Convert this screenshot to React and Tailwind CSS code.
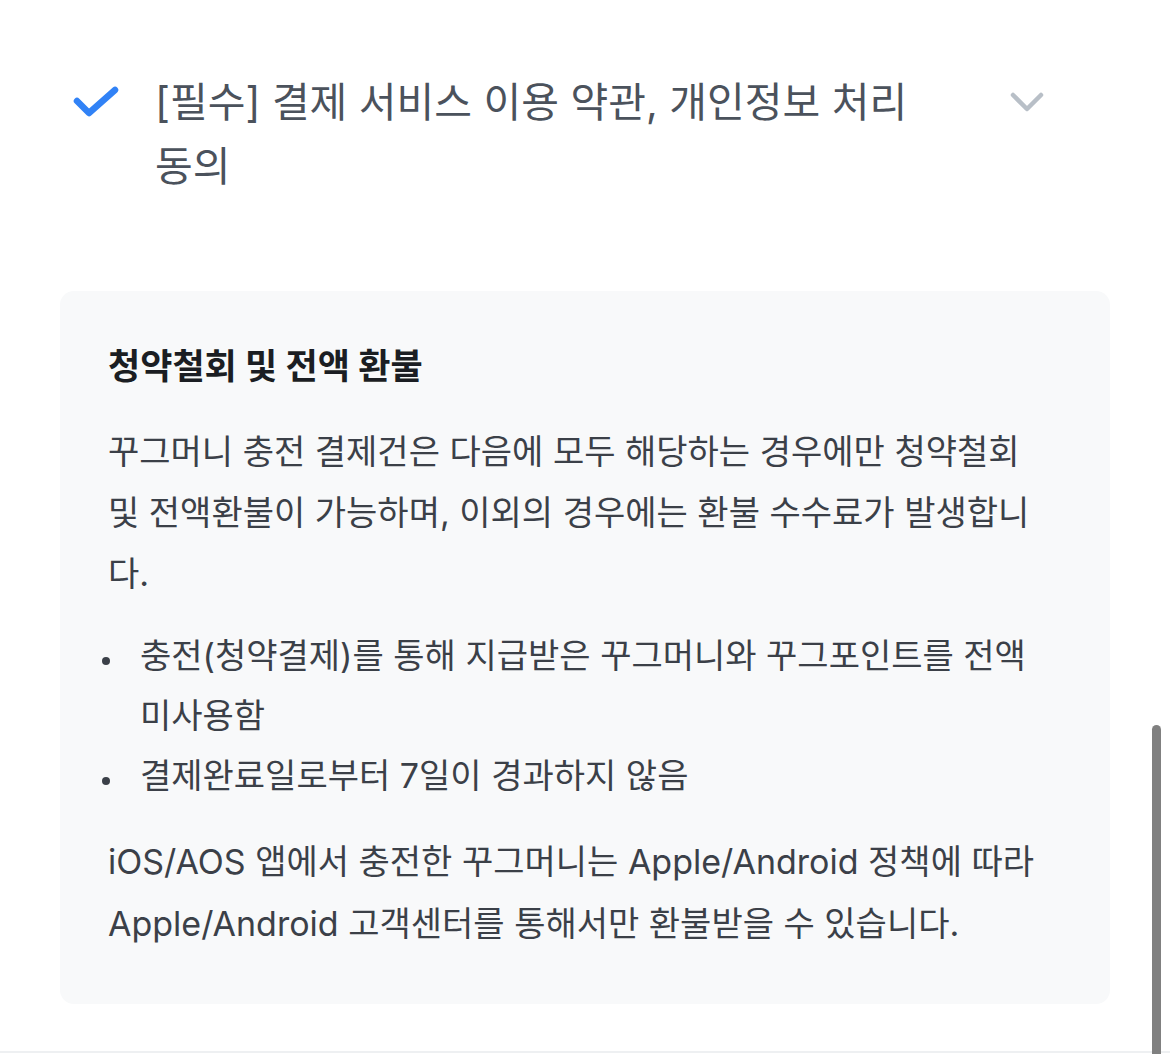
const font = { fontFamily: 'Inter, "Noto Sans CJK KR", sans-serif' };

const bullets = [
  '충전(청약결제)를 통해 지급받은 꾸그머니와 꾸그포인트를 전액 미사용함',
  '결제완료일로부터 7일이 경과하지 않음',
];

const App = () => {
  return (
    <div className="relative min-h-screen bg-white overflow-hidden" style={font}>
      {/* agreement row */}
      <div className="flex items-start pt-[70px] pl-[72px] pr-[126px]">
        <div className="w-[83px] h-[64px] flex items-center shrink-0">
          <svg width="48" height="34" viewBox="0 0 48 34" fill="none">
            <path d="M5 16 L17 28 L43 5" stroke="#3182f6" strokeWidth="6.5" strokeLinecap="round" strokeLinejoin="round" />
          </svg>
        </div>
        <p className="w-[800px] text-[41px] leading-[64px] text-[#4b525c]">
          [필수] 결제 서비스 이용 약관, 개인정보 처리 동의
        </p>
        <div className="h-[64px] flex items-center ml-auto">
          <svg width="34" height="20" viewBox="0 0 34 20" fill="none">
            <path d="M3 3 L17 17 L31 3" stroke="#b8bfc7" strokeWidth="4.5" strokeLinecap="round" strokeLinejoin="round" />
          </svg>
        </div>
      </div>

      {/* refund info card */}
      <div className="mx-[60px] mt-[93px] bg-[#f8f9fa] rounded-[14px] pl-[48px] pr-[62px] pt-[48px] pb-[49px] text-[34px] text-[#3b4048]">
        <h3 className="font-bold text-[35px] text-[#1b1e23] leading-[54px]">청약철회 및 전액 환불</h3>
        <p className="mt-[28px] leading-[61px]">
          꾸그머니 충전 결제건은 다음에 모두 해당하는 경우에만 청약철회 및 전액환불이 가능하며, 이외의 경우에는 환불 수수료가 발생합니다.
        </p>
        <ul className="mt-[22px]">
          {bullets.map(b => (
            <li key={b} className="flex leading-[60px]">
              <span className="w-[32px] shrink-0 pt-[31px]">
                <span className="block -ml-[6px] w-[8px] h-[8px] rounded-full bg-[#3b4048]" />
              </span>
              <span>{b}</span>
            </li>
          ))}
        </ul>
        <p className="mt-[25px] leading-[62px]">
          iOS/AOS 앱에서 충전한 꾸그머니는 Apple/Android 정책에 따라 Apple/Android 고객센터를 통해서만 환불받을 수 있습니다.
        </p>
      </div>

      <div className="h-[47px]" />
      <div className="border-t-2 border-[#eef0f2]" />

      {/* overlay scrollbar */}
      <div className="absolute right-[9px] top-[725px] bottom-0 w-[9px] rounded-t-full bg-[#808080]" />
    </div>
  );
};

export default App;
